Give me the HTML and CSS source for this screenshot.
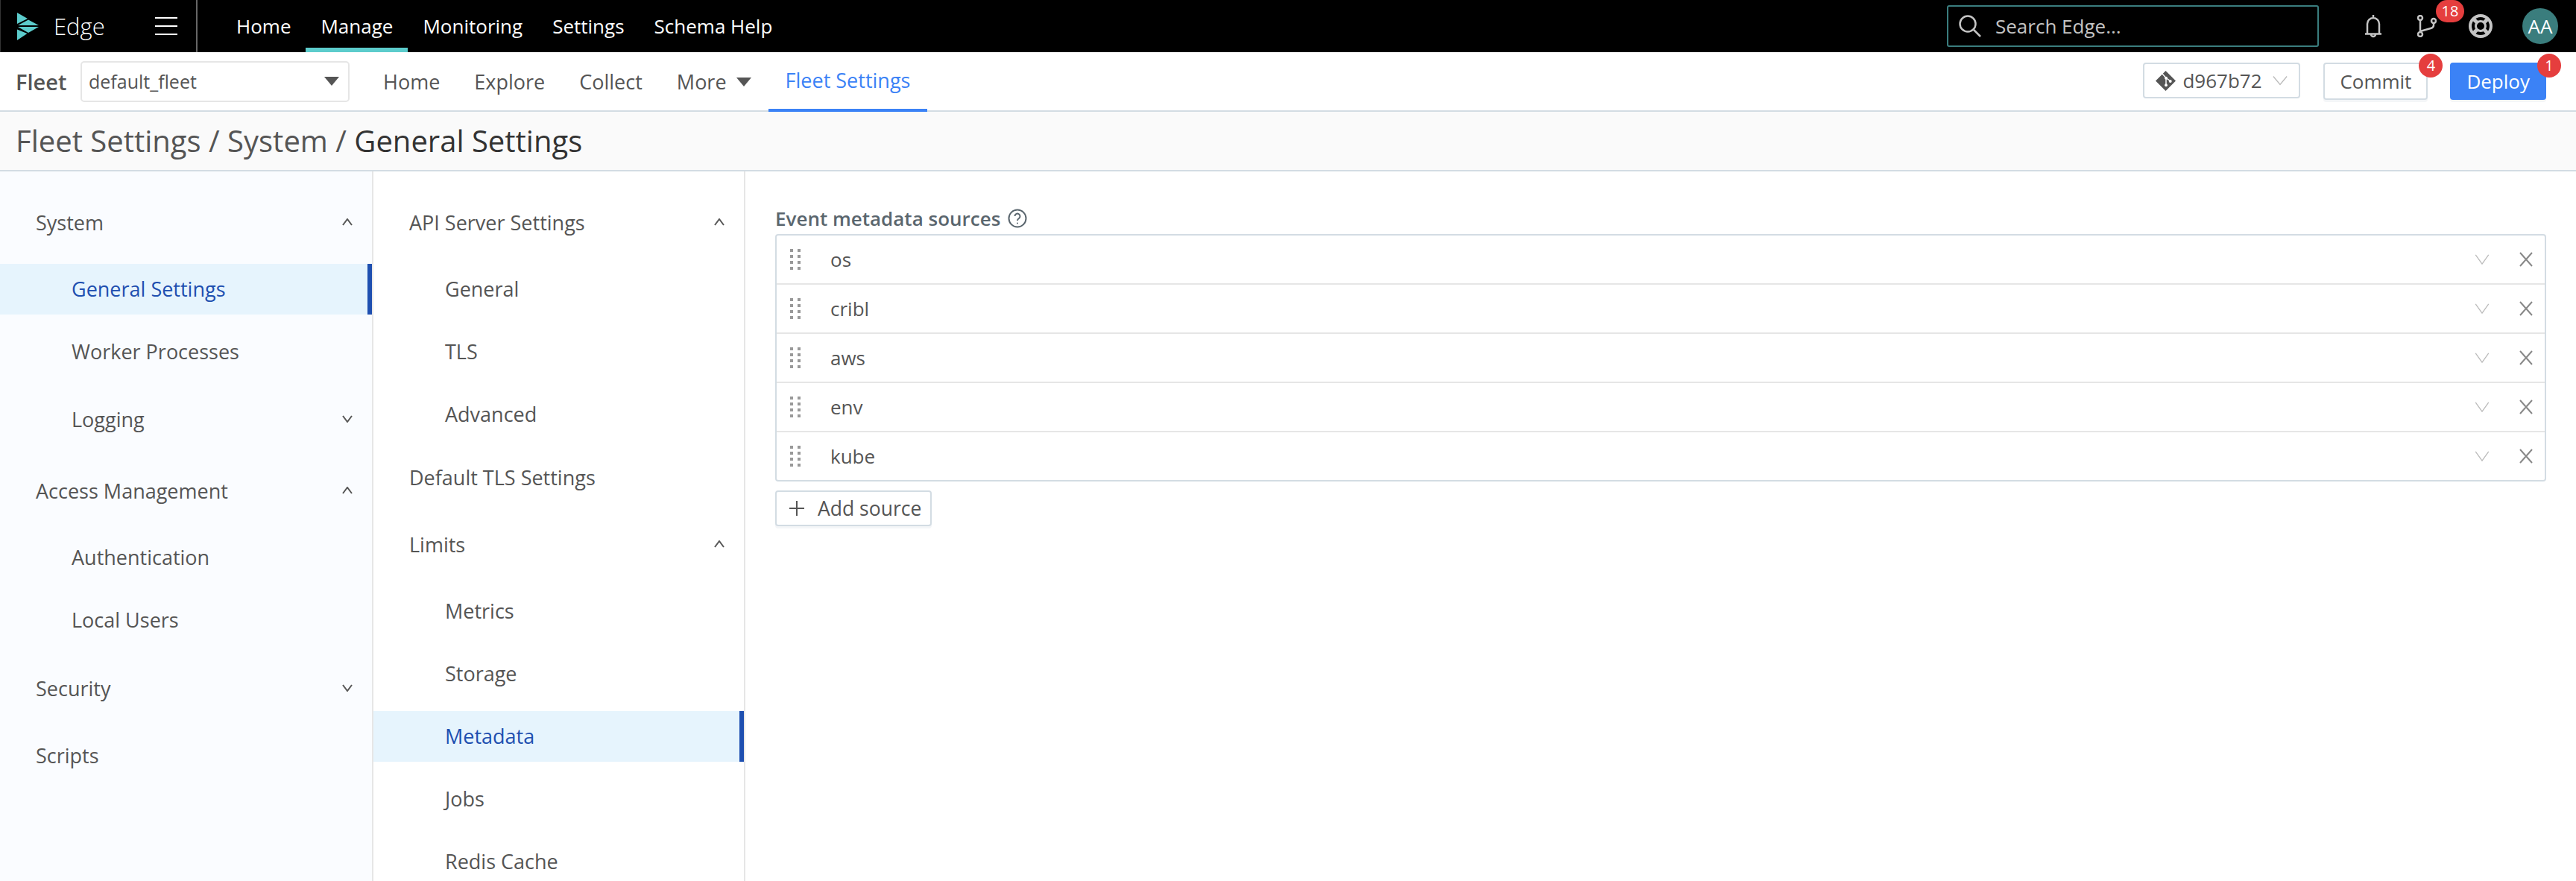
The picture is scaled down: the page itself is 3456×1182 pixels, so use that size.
FILE: index.html
```html
<!DOCTYPE html>
<html lang="en">
<head>
  <meta charset="UTF-8">
  <meta name="viewport" content="width=device-width, initial-scale=1.0">
  <title>Fleet Settings - General Settings</title>
  <link rel="stylesheet" href="styles.css">
</head>
<body>
  <header class="topbar">
    <div class="brand">
      <svg class="logo" viewBox="0 0 30 37"><path d="M0 0 14 8 0 15Z M1 17 15 9.500 29 17Z M1 19H29L15 27Z M0 22.500 13.500 28 0 37Z"/></svg>
      <span class="brand-name">Edge</span>
      <span class="burger"><i></i><i></i><i></i></span>
    </div>
    <nav class="topnav">
      <a href="#">Home</a>
      <a href="#" class="active">Manage</a>
      <a href="#">Monitoring</a>
      <a href="#">Settings</a>
      <a href="#">Schema Help</a>
    </nav>
    <div class="search">
      <svg class="search-icon" viewBox="0 0 30 30"><circle cx="12" cy="12" r="10.500"/><path d="M19.500 19.500 29 29"/></svg>
      <span>Search Edge...</span>
    </div>
    <div class="top-icons">
      <svg class="bell" viewBox="0 0 24 32"><path d="M4 26V13a8 8 0 0 1 16 0v13M1 26.500h22M12 1v4M9 27a3 3 0 0 0 6 0"/></svg>
      <span class="branch">
        <svg viewBox="0 0 26 30"><circle cx="4" cy="4" r="3"/><circle cx="4" cy="26" r="3"/><circle cx="22" cy="8" r="3"/><path d="M4 7v16M4 22l14-4q4-1 4-4v-3"/></svg>
        <b class="badge wide">18</b>
      </span>
      <svg class="buoy" viewBox="0 0 32 32"><circle cx="16" cy="16" r="14" stroke-width="4"/><circle cx="16" cy="16" r="6.500" stroke-width="3"/><path d="M6 6l6 6M26 6l-6 6M6 26l6-6M26 26l-6-6" stroke-width="5"/></svg>
      <span class="avatar">AA</span>
    </div>
  </header>

  <div class="fleetbar">
    <span class="fleet-label">Fleet</span>
    <div class="fleet-select"><span>default_fleet</span><i class="tri"></i></div>
    <nav class="subnav">
      <a href="#">Home</a>
      <a href="#">Explore</a>
      <a href="#">Collect</a>
      <a href="#">More<i class="tri"></i></a>
      <a href="#" class="active">Fleet Settings</a>
    </nav>
    <div class="fleet-actions">
      <div class="commit-ref">
        <svg class="git" viewBox="0 0 28 28"><path d="M14 0 28 14 14 28 0 14Z"/><path class="git-cut" d="M8 2.500 14.500 10V20M14.500 10 21 14.500"/><circle class="git-dot" cx="14.500" cy="20" r="2"/><circle class="git-dot" cx="14.500" cy="10" r="2"/><circle class="git-dot" cx="20.500" cy="14.500" r="2"/></svg>
        <span>d967b72</span>
        <svg class="chev light" viewBox="0 0 22 14"><path d="M1 1l10 12L21 1"/></svg>
      </div>
      <button class="btn">Commit<b class="badge">4</b></button>
      <button class="btn primary">Deploy<b class="badge">1</b></button>
    </div>
  </div>

  <div class="crumbs">Fleet Settings / System / <span>General Settings</span></div>

  <div class="page">
    <aside class="side">
      <div class="group wide">
        <div class="head">System<svg class="caret" viewBox="0 0 14 10"><path d="M1 9l6-8 6 8"/></svg></div>
        <div class="kids">
          <a class="item active">General Settings</a>
          <a class="item">Worker Processes</a>
          <div class="head sub">Logging<svg class="caret" viewBox="0 0 14 10"><path d="M1 1l6 8 6-8"/></svg></div>
        </div>
      </div>
      <div class="group wide">
        <div class="head">Access Management<svg class="caret" viewBox="0 0 14 10"><path d="M1 9l6-8 6 8"/></svg></div>
        <div class="kids">
          <a class="item">Authentication</a>
          <a class="item">Local Users</a>
        </div>
      </div>
      <div class="group mid">
        <div class="head">Security<svg class="caret" viewBox="0 0 14 10"><path d="M1 1l6 8 6-8"/></svg></div>
      </div>
      <div class="group">
        <div class="head">Scripts</div>
      </div>
    </aside>

    <aside class="side second">
      <div class="group">
        <div class="head">API Server Settings<svg class="caret" viewBox="0 0 14 10"><path d="M1 9l6-8 6 8"/></svg></div>
        <div class="kids">
          <a class="item">General</a>
          <a class="item">TLS</a>
          <a class="item">Advanced</a>
        </div>
      </div>
      <div class="group mid">
        <div class="head">Default TLS Settings</div>
      </div>
      <div class="group">
        <div class="head">Limits<svg class="caret" viewBox="0 0 14 10"><path d="M1 9l6-8 6 8"/></svg></div>
        <div class="kids">
          <a class="item">Metrics</a>
          <a class="item">Storage</a>
          <a class="item active">Metadata</a>
          <a class="item">Jobs</a>
          <a class="item">Redis Cache</a>
        </div>
      </div>
    </aside>

    <main class="content">
      <label class="field-label">Event metadata sources
        <svg class="help" viewBox="0 0 26 26"><circle cx="13" cy="13" r="11.500"/><path d="M9.500 10a3.500 3.500 0 1 1 5.500 3c-1.300.9-2 1.500-2 3"/><circle class="dot" cx="13" cy="19.500" r="1"/></svg>
      </label>
      <div class="sources">
        <div class="source"><span class="grip"><i></i><i></i><i></i><i></i><i></i><i></i><i></i><i></i></span><span class="source-name">os</span><svg class="chev light" viewBox="0 0 22 16"><path d="M1 1l10 14L21 1"/></svg><svg class="close" viewBox="0 0 18 20"><path d="M1 1l16 18M17 1 1 19"/></svg></div>
        <div class="source"><span class="grip"><i></i><i></i><i></i><i></i><i></i><i></i><i></i><i></i></span><span class="source-name">cribl</span><svg class="chev light" viewBox="0 0 22 16"><path d="M1 1l10 14L21 1"/></svg><svg class="close" viewBox="0 0 18 20"><path d="M1 1l16 18M17 1 1 19"/></svg></div>
        <div class="source"><span class="grip"><i></i><i></i><i></i><i></i><i></i><i></i><i></i><i></i></span><span class="source-name">aws</span><svg class="chev light" viewBox="0 0 22 16"><path d="M1 1l10 14L21 1"/></svg><svg class="close" viewBox="0 0 18 20"><path d="M1 1l16 18M17 1 1 19"/></svg></div>
        <div class="source"><span class="grip"><i></i><i></i><i></i><i></i><i></i><i></i><i></i><i></i></span><span class="source-name">env</span><svg class="chev light" viewBox="0 0 22 16"><path d="M1 1l10 14L21 1"/></svg><svg class="close" viewBox="0 0 18 20"><path d="M1 1l16 18M17 1 1 19"/></svg></div>
        <div class="source"><span class="grip"><i></i><i></i><i></i><i></i><i></i><i></i><i></i><i></i></span><span class="source-name">kube</span><svg class="chev light" viewBox="0 0 22 16"><path d="M1 1l10 14L21 1"/></svg><svg class="close" viewBox="0 0 18 20"><path d="M1 1l16 18M17 1 1 19"/></svg></div>
      </div>
      <button class="btn add"><svg class="plus" viewBox="0 0 20 20"><path d="M10 0v20M0 10h20"/></svg>Add source</button>
    </main>
  </div>
</body>
</html>
```

FILE: styles.css
```css
* {
  box-sizing: border-box;
}
html, body {
  height: 100%;
}
body {
  margin: 0;
  height: 1182px;
  overflow: hidden;
  font-family: "Open Sans", sans-serif;
  font-size: 26px;
  color: #555;
  background: white;
}
a {
  color: inherit;
  text-decoration: none;
}
svg {
  fill: none;
  stroke: currentColor;
  flex: none;
}

/* top bar */
.topbar {
  height: 70px;
  background: black;
  color: white;
  display: flex;
  align-items: center;
}
.brand {
  width: 265px;
  height: 70px;
  padding-left: 22px;
  border-left: 1px solid #333;
  border-right: 2px solid #666;
  display: flex;
  align-items: center;
}
.logo {
  width: 30px;
  height: 37px;
  fill: #5ccccc;
  stroke: none;
}
.brand-name {
  font-size: 31px;
  font-weight: 300;
  margin-left: 19px;
  width: 136px;
}
.burger {
  display: flex;
  flex-direction: column;
  gap: 9px;
}
.burger i {
  display: block;
  width: 30px;
  height: 2px;
  background: white;
}
.topnav {
  display: flex;
  margin-left: 32px;
}
.topnav a {
  height: 70px;
  line-height: 70px;
  padding: 0 20px;
}
.topnav a.active {
  border-bottom: 6px solid #5ccccc;
}
.search {
  width: 499px;
  height: 56px;
  margin-left: auto;
  padding-left: 14px;
  border: 2px solid #3a7d7e;
  border-radius: 3px;
  color: #c4c4c4;
  display: flex;
  align-items: center;
  gap: 19px;
}
.search-icon {
  width: 30px;
  height: 30px;
  stroke-width: 2.500;
}
.top-icons {
  width: 345px;
  display: flex;
  align-items: center;
  color: #c4c4c4;
}
.bell {
  width: 24px;
  height: 32px;
  margin-left: 61px;
  stroke-width: 2.500;
}
.branch {
  position: relative;
  display: flex;
  margin-left: 47px;
}
.branch svg {
  width: 26px;
  height: 30px;
  stroke-width: 2.500;
}
.buoy {
  width: 32px;
  height: 32px;
  margin-left: 43px;
}
.avatar {
  width: 48px;
  height: 48px;
  margin-left: 40px;
  border-radius: 50%;
  background: #3a7d7d;
  color: white;
  text-align: center;
  line-height: 48px;
}
.badge {
  position: absolute;
  top: -14px;
  right: -22px;
  min-width: 32px;
  height: 32px;
  border-radius: 16px;
  background: #e53e3e;
  color: white;
  font-size: 20px;
  font-weight: 400;
  line-height: 32px;
  text-align: center;
}
.badge.wide {
  top: -20px;
  right: -37px;
  width: 38px;
  height: 30px;
  line-height: 30px;
}

/* fleet bar */
.fleetbar {
  height: 80px;
  padding-left: 21px;
  border-bottom: 2px solid #d3dce3;
  display: flex;
  align-items: center;
}
.fleet-label {
  font-weight: 600;
  font-size: 29px;
  width: 87px;
}
.fleet-select {
  width: 361px;
  height: 55px;
  padding: 0 12px 0 9px;
  border: 2px solid #e6e6e6;
  border-radius: 5px;
  font-size: 25px;
  display: flex;
  align-items: center;
  justify-content: space-between;
}
.tri {
  display: block;
  width: 0;
  height: 0;
  border-left: 10px solid transparent;
  border-right: 10px solid transparent;
  border-top: 12px solid #555;
}
.subnav {
  display: flex;
  margin-left: 22px;
  align-self: stretch;
  font-size: 27px;
}
.subnav a {
  padding: 0 23px;
  line-height: 78px;
  display: flex;
  align-items: center;
  gap: 13px;
  margin-bottom: -2px;
  font-weight: 500;
}
.subnav a.active {
  color: #3b82f6;
  border-bottom: 4px solid #3b82f6;
}
.fleet-actions {
  margin-left: auto;
  padding-right: 40px;
  display: flex;
  align-items: center;
}
.commit-ref {
  width: 211px;
  height: 48px;
  padding-left: 15px;
  border: 2px solid #d3dce3;
  border-radius: 4px;
  display: flex;
  align-items: center;
  margin-top: -2px;
}
.git {
  width: 27px;
  height: 27px;
  fill: #555;
  stroke: none;
}
.git-cut {
  fill: none;
  stroke: white;
  stroke-width: 1.500;
}
.git-dot {
  fill: white;
}
.commit-ref span {
  margin-left: 9px;
}
.chev {
  width: 20px;
  height: 14px;
  stroke-width: 1.500;
}
.chev.light {
  color: #bbb;
}
.commit-ref .chev {
  margin-left: 14px;
}
.btn {
  position: relative;
  height: 50px;
  padding: 0 20px;
  border: 2px solid #d3dce3;
  border-radius: 4px;
  background: white;
  color: #555;
  font-family: inherit;
  font-size: 26px;
  box-shadow: 0 3px 0 #f4f6f8;
}
.fleet-actions .btn {
  margin-left: 31px;
}
.fleet-actions .primary {
  margin-left: 30px;
  border-color: #3b82f6;
  background: #3b82f6;
  color: white;
}

/* breadcrumb */
.crumbs {
  height: 80px;
  padding-left: 21px;
  background: #fafafa;
  border-bottom: 2px solid #d3dce3;
  font-size: 40px;
  line-height: 78px;
  color: #555;
}
.crumbs span {
  color: #333;
}

/* layout */
.page {
  display: flex;
  height: 952px;
}
.side {
  width: 501px;
  height: 100%;
  padding-top: 32px;
  background: #fafcff;
  border-right: 2px solid #e6e6e6;
  overflow: hidden;
  font-size: 27px;
  font-weight: 500;
}
.side.second {
  width: 499px;
  background: white;
}
.group {
  margin-bottom: 14px;
}
.group.mid {
  margin-bottom: 18px;
}
.group.wide {
  margin-bottom: 21px;
}
.head {
  height: 72px;
  padding: 0 26px 0 48px;
  display: flex;
  align-items: center;
  justify-content: space-between;
}
.head.sub {
  padding-left: 96px;
  margin-top: 4px;
  margin-bottom: 3px;
}
.caret {
  width: 14px;
  height: 10px;
  stroke-width: 2;
}
.kids {
  margin-top: 20px;
  display: flex;
  flex-direction: column;
  gap: 16px;
}
.item {
  display: block;
  height: 68px;
  padding-left: 96px;
  line-height: 68px;
}
.item.active {
  background: #e6f4fd;
  border-right: 6px solid #1e4fb0;
  color: #1e4fb0;
}

/* metadata sources */
.content {
  flex: 1;
  padding: 46px 40px 0;
}
.field-label {
  display: flex;
  align-items: center;
  gap: 10px;
  height: 34px;
  font-weight: 600;
  color: #5a666e;
}
.help {
  width: 26px;
  height: 26px;
  stroke-width: 2;
}
.help .dot {
  fill: currentColor;
  stroke: none;
}
.sources {
  margin-top: 4px;
  border: 2px solid #d3dce3;
  border-radius: 4px;
}
.source {
  height: 66px;
  padding-left: 18px;
  padding-right: 16px;
  border-bottom: 2px solid #e6e6e6;
  display: flex;
  align-items: center;
}
.source:last-child {
  height: 64px;
  border-bottom: none;
}
.grip {
  width: 14px;
  display: grid;
  grid-template-columns: 4px 4px;
  justify-content: space-between;
  gap: 4px 0;
}
.grip i {
  display: block;
  width: 4px;
  height: 4px;
  background: #999;
}
.source-name {
  margin-left: 40px;
  flex: 1;
}
.close {
  width: 18px;
  height: 20px;
  margin-left: 40px;
  color: #888;
  stroke-width: 2;
}
.add {
  height: 48px;
  margin-top: 12px;
  padding: 0 12px 0 17px;
  font-size: 26.500px;
  display: flex;
  align-items: center;
  gap: 18px;
}
.plus {
  width: 20px;
  height: 20px;
  stroke-width: 2;
}
```
